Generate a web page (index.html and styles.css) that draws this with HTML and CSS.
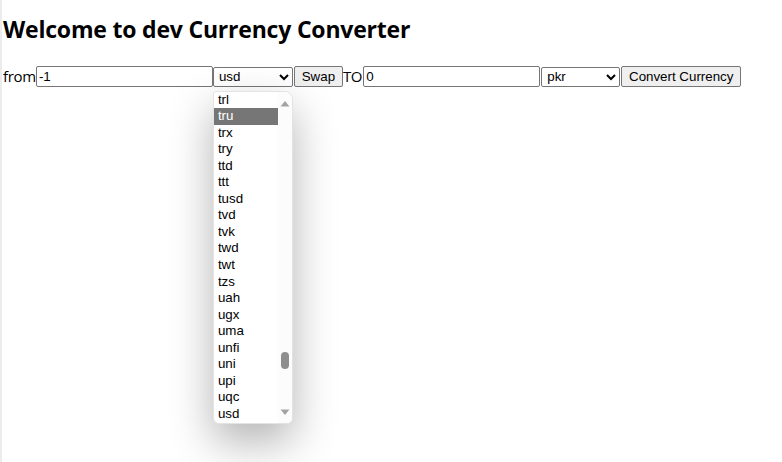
FILE: index.html
```html
<!DOCTYPE html>
<html>
<head>
<meta charset="utf-8">
<title>Currency Converter</title>
<link rel="stylesheet" href="styles.css">
</head>
<body>
<div class="page">
  <h2 class="title">Welcome to dev Currency Converter</h2>
  <div class="row">
    <span class="label">from</span>
    <input class="amount" type="text" value="-1">
    <div class="select-wrap">
      <select class="cur"><option>usd</option></select>
      <div class="popup">
        <div class="list">
          <div class="opt">trl</div>
          <div class="opt sel">tru</div>
          <div class="opt">trx</div>
          <div class="opt">try</div>
          <div class="opt">ttd</div>
          <div class="opt">ttt</div>
          <div class="opt">tusd</div>
          <div class="opt">tvd</div>
          <div class="opt">tvk</div>
          <div class="opt">twd</div>
          <div class="opt">twt</div>
          <div class="opt">tzs</div>
          <div class="opt">uah</div>
          <div class="opt">ugx</div>
          <div class="opt">uma</div>
          <div class="opt">unfi</div>
          <div class="opt">uni</div>
          <div class="opt">upi</div>
          <div class="opt">uqc</div>
          <div class="opt">usd</div>
        </div>
        <div class="scrollbar">
          <svg class="arrow" width="10" height="7" viewBox="0 0 10 7"><polygon points="0.5,6.5 5,1 9.5,6.5" fill="#a3a3a3"/></svg>
          <div class="track"><div class="thumb"></div></div>
          <svg class="arrow" width="10" height="7" viewBox="0 0 10 7"><polygon points="0.5,0.5 9.5,0.5 5,6" fill="#a3a3a3"/></svg>
        </div>
      </div>
    </div>
    <button class="btn btn-swap">Swap</button>
    <span class="label label-to">TO</span>
    <input class="amount" type="text" value="0">
    <select class="cur cur-to"><option>pkr</option></select>
    <button class="btn btn-convert">Convert Currency</button>
  </div>
</div>
</body>
</html>
```
FILE: styles.css
```css
html, body {
  margin: 0;
  padding: 0;
  background: #ffffff;
}
body {
  font-family: "Open Sans", "Noto Sans", "DejaVu Sans", sans-serif;
  color: #000;
}
.page {
  border-left: 2px solid #ececec;
  padding-left: 1px;
  min-height: 462px;
  box-sizing: border-box;
}
.title {
  margin: 0;
  padding-top: 13px;
  height: 66px;
  box-sizing: border-box;
  font-size: 23px;
  line-height: 32px;
  font-weight: 700;
  letter-spacing: -0.2px;
}
.row {
  display: flex;
  align-items: center;
  height: 21px;
}
.label {
  font-family: "Open Sans", "Noto Sans", sans-serif;
  font-size: 15px;
  letter-spacing: -0.3px;
  line-height: 21px;
}
.label-to {
  padding-right: 1px;
}
.amount {
  box-sizing: border-box;
  width: 177px;
  height: 21px;
  margin: 0;
  padding: 1px 2px;
  border: 1px solid #767676;
  border-radius: 2px;
  font-family: "Liberation Sans", Arial, sans-serif;
  font-size: 13.33px;
  color: #000;
  background: #fff;
  outline: none;
}
.select-wrap {
  position: relative;
  display: flex;
}
.cur {
  box-sizing: border-box;
  width: 80px;
  height: 20px;
  margin: 0;
  padding: 0 0 0 1px;
  border: 1px solid #767676;
  border-radius: 2px;
  font-family: "Liberation Sans", Arial, sans-serif;
  font-size: 13.33px;
  color: #000;
  background: #fff;
}
.cur-to {
  margin-left: 1px;
  width: 79px;
}
.btn {
  box-sizing: border-box;
  height: 21px;
  margin: 0 0 0 1px;
  padding: 1px 6px;
  border: 1px solid #767676;
  border-radius: 2px;
  background: #efefef;
  font-family: "Liberation Sans", Arial, sans-serif;
  font-size: 13.33px;
  color: #000;
  line-height: 17px;
}
.btn-swap { width: 49px; }
.btn-convert { width: 120px; }
.popup {
  position: absolute;
  left: 0;
  top: 24px;
  width: 80px;
  height: 333px;
  box-sizing: border-box;
  background: #fff;
  border: 1px solid #e3e3e3;
  border-radius: 3px 8px 6px 6px;
  box-shadow: 0 18px 44px rgba(0, 0, 0, 0.3);
  display: flex;
  z-index: 10;
  overflow: hidden;
}
.list {
  width: 64px;
  display: flex;
  flex-direction: column;
}
.opt {
  height: 16.56px;
  line-height: 16.56px;
  padding-left: 4px;
  font-family: "Liberation Sans", Arial, sans-serif;
  font-size: 13.33px;
  color: #000;
  white-space: nowrap;
}
.opt.sel {
  background: #767676;
  color: #fff;
}
.scrollbar {
  flex: 1;
  display: flex;
  flex-direction: column;
  align-items: center;
  padding: 8px 0 7px;
  background: #fcfcfc;
}
.arrow { display: block; }
.track {
  flex: 1;
  width: 100%;
  display: flex;
  flex-direction: column;
  align-items: center;
  justify-content: flex-end;
  padding-bottom: 40px;
}
.thumb {
  width: 8px;
  height: 17px;
  border-radius: 4px;
  background: #8f8f8f;
}
```
